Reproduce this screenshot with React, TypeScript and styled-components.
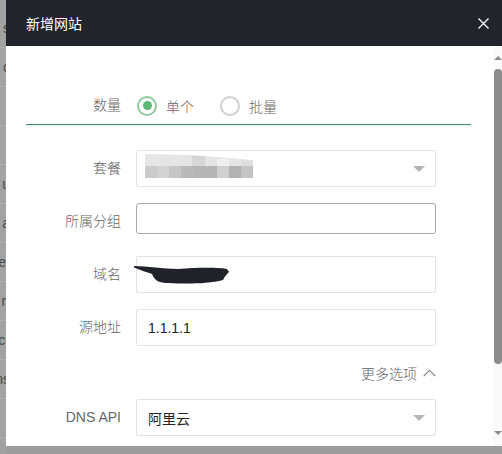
import React from 'react'
import styled, { createGlobalStyle } from 'styled-components'

const GlobalStyle = createGlobalStyle`
	html, body {
		margin: 0;
		padding: 0;
		background: #9d9d9d;
		overflow: hidden;
	}
	* {
		box-sizing: border-box;
	}
`

const Page = styled.div`
	display: flex;
	width: 502px;
	height: 454px;
	font-family: 'Liberation Sans', 'Noto Sans CJK SC', sans-serif;
	background: #9d9d9d;
`

const Backdrop = styled.div`
	width: 6px;
	flex: none;
	overflow: hidden;
	background: #a2a2a2;
	display: flex;
	flex-direction: column;
	padding-top: 9px;
`

const BackdropRow = styled.div`
	height: 39px;
	flex: none;
	display: flex;
	justify-content: flex-end;
	align-items: center;
	border-bottom: 1px solid #b0b0b0;
	color: #4a4a4a;
	font-size: 14px;
	white-space: nowrap;
	margin-right: -4px;
`

const Dialog = styled.div`
	flex: 1;
	height: 446px;
	display: flex;
	flex-direction: column;
	background: #fff;
`

const Header = styled.div`
	height: 46px;
	flex: none;
	background: #21242b;
	display: flex;
	align-items: center;
	justify-content: space-between;
	padding: 0 13px 0 20px;
	color: #fff;
	font-size: 14px;
`

const Title = styled.span`
	letter-spacing: 0;
`

const CloseButton = styled.span`
	display: flex;
	align-items: center;
	justify-content: center;
	width: 12px;
	height: 12px;
`

const Body = styled.div`
	flex: 1;
	display: flex;
	min-height: 0;
`

const Content = styled.div`
	flex: 1;
	padding: 41px 22px 0 20px;
	display: flex;
	flex-direction: column;
	font-weight: 300;
`

const TabRow = styled.div`
	height: 40px;
	display: flex;
	align-items: center;
	border-bottom: 1px solid #3f8c7b;
	box-shadow: 0 1px 0 #e3f3f0;
	margin-bottom: 25px;
`

const Label = styled.div`
	width: 95px;
	flex: none;
	text-align: right;
	color: #666;
	font-size: 14px;
	margin-right: 15px;
	line-height: 37px;
`

const RadioGroup = styled.div`
	display: flex;
	align-items: center;
	margin-left: 1px;
`

const RadioItem = styled.label`
	display: flex;
	align-items: center;
	color: #666;
	font-size: 14px;
	margin-right: 26px;
`

const RadioCircle = styled.span<{ $checked?: boolean }>`
	width: 20px;
	height: 20px;
	border-radius: 50%;
	border: 2px solid ${(p) => (p.$checked ? '#8fcb9f' : '#cfcfcf')};
	display: flex;
	align-items: center;
	justify-content: center;
	margin-right: 9px;

	&::after {
		content: '';
		display: ${(p) => (p.$checked ? 'block' : 'none')};
		width: 9px;
		height: 9px;
		border-radius: 50%;
		background: #5cb874;
	}
`

const FormRow = styled.div<{ $last?: boolean }>`
	display: flex;
	align-items: flex-start;
	height: 37px;
	margin-bottom: ${(p) => (p.$last ? '0' : '16px')};
`

const Field = styled.div<{ $small?: boolean }>`
	width: 300px;
	height: ${(p) => (p.$small ? '31px' : '37px')};
	border: 1px solid ${(p) => (p.$small ? '#a9a9a9' : '#e3e3e3')};
	border-radius: ${(p) => (p.$small ? '3px' : '2px')};
	display: flex;
	align-items: center;
	padding: 0 10px 0 11px;
	color: #222;
	font-size: 14px;
	font-weight: 400;
`

const FieldText = styled.span`
	flex: 1;
`

const Caret = styled.span`
	width: 0;
	height: 0;
	border-left: 6px solid transparent;
	border-right: 6px solid transparent;
	border-top: 6px solid #b5b5b5;
	margin-top: 1px;
`

const MoreRow = styled.div`
	display: flex;
	justify-content: flex-end;
	align-items: center;
	width: 410px;
	height: 21px;
	margin: 17px 0 16px;
	color: #666;
	font-size: 14px;
	gap: 6px;
`

const Scrollbar = styled.div`
	width: 9px;
	flex: none;
	display: flex;
	flex-direction: column;
	align-items: center;
	padding: 10px 0 11px;
	background-color: #fafafa;
	background-image: radial-gradient(#e6e6e6 0.6px, transparent 0.7px);
	background-size: 2px 2px;
`

const ScrollArrow = styled.span<{ $down?: boolean }>`
	width: 0;
	height: 0;
	border-left: 4px solid transparent;
	border-right: 4px solid transparent;
	${(p) =>
		p.$down
			? 'border-top: 4px solid #8d8d8d;'
			: 'border-bottom: 4px solid #8d8d8d;'}
`

const ScrollThumb = styled.span`
	width: 8px;
	height: 295px;
	margin-top: 9px;
	margin-left: 1px;
	border-radius: 4px;
	background: #8c8c8c;
`

const Spacer = styled.span`
	flex: 1;
`

const backdropTexts = ['s', 'c', '', '', 'u', 'a', 'e.', 'rı', 'cr', 'ns', '']

const Blurred = () => (
	<svg width='110' height='26' viewBox='0 0 110 26' style={{ marginLeft: -3 }}>
		<polygon points='0,0 48,1 108,6 108,12 0,12' fill='#e5e5e5' />
		<rect x='47' y='2' width='13' height='10' fill='#d6d6d6' />
		<rect x='72' y='5' width='12' height='7' fill='#efefef' />
		<rect x='96' y='6' width='12' height='6' fill='#dedede' />
		<rect x='0' y='12' width='13' height='12' fill='#cbcbcb' />
		<rect x='13' y='12' width='11' height='12' fill='#d3d3d3' />
		<rect x='24' y='12' width='12' height='12' fill='#c6c6c6' />
		<rect x='36' y='12' width='12' height='12' fill='#b9b9b9' />
		<rect x='48' y='12' width='24' height='12' fill='#b5b5b5' />
		<rect x='72' y='12' width='12' height='12' fill='#d0d0d0' />
		<rect x='84' y='12' width='12' height='12' fill='#b2b2b2' />
		<rect x='96' y='12' width='12' height='12' fill='#c4c4c4' />
	</svg>
)

const Scribble = () => (
	<svg
		width='100'
		height='22'
		viewBox='0 0 100 22'
		style={{ marginLeft: -15 }}
	>
		<path
			d='M1 2 C 14 2, 30 5, 45 5 C 62 4, 80 3, 94 5 L 96 8 C 94 10, 92 12, 90 16 C 75 20, 52 20, 36 19 C 26 19, 22 17, 19 10 C 13 8, 7 6, 1 3.5 Z'
			fill='#1f2228'
		/>
	</svg>
)

function App() {
	return (
		<>
			<GlobalStyle />
			<Page>
				<Backdrop>
					{backdropTexts.map((t, i) => (
						<BackdropRow key={i}>{t}</BackdropRow>
					))}
				</Backdrop>
				<Dialog>
					<Header>
						<Title>新增网站</Title>
						<CloseButton>
							<svg width='11' height='11' viewBox='0 0 11 11'>
								<path
									d='M0.5 0.5 L10.5 10.5 M10.5 0.5 L0.5 10.5'
									stroke='#fff'
									strokeWidth='1.3'
								/>
							</svg>
						</CloseButton>
					</Header>
					<Body>
						<Content>
							<TabRow>
								<Label>数量</Label>
								<RadioGroup>
									<RadioItem>
										<RadioCircle $checked />
										单个
									</RadioItem>
									<RadioItem>
										<RadioCircle />
										批量
									</RadioItem>
								</RadioGroup>
							</TabRow>
							<FormRow>
								<Label>套餐</Label>
								<Field>
									<FieldText>
										<Blurred />
									</FieldText>
									<Caret />
								</Field>
							</FormRow>
							<FormRow>
								<Label>所属分组</Label>
								<Field $small />
							</FormRow>
							<FormRow>
								<Label>域名</Label>
								<Field>
									<Scribble />
								</Field>
							</FormRow>
							<FormRow $last>
								<Label>源地址</Label>
								<Field>
									<FieldText>1.1.1.1</FieldText>
								</Field>
							</FormRow>
							<MoreRow>
								更多选项
								<svg width='13' height='8' viewBox='0 0 13 8'>
									<path
										d='M0.8 7.2 L6.5 1.2 L12.2 7.2'
										fill='none'
										stroke='#777'
										strokeWidth='1.1'
									/>
								</svg>
							</MoreRow>
							<FormRow>
								<Label>DNS API</Label>
								<Field>
									<FieldText>阿里云</FieldText>
									<Caret />
								</Field>
							</FormRow>
						</Content>
						<Scrollbar>
							<ScrollArrow />
							<ScrollThumb />
							<Spacer />
							<ScrollArrow $down />
						</Scrollbar>
					</Body>
				</Dialog>
			</Page>
		</>
	)
}

export default App
